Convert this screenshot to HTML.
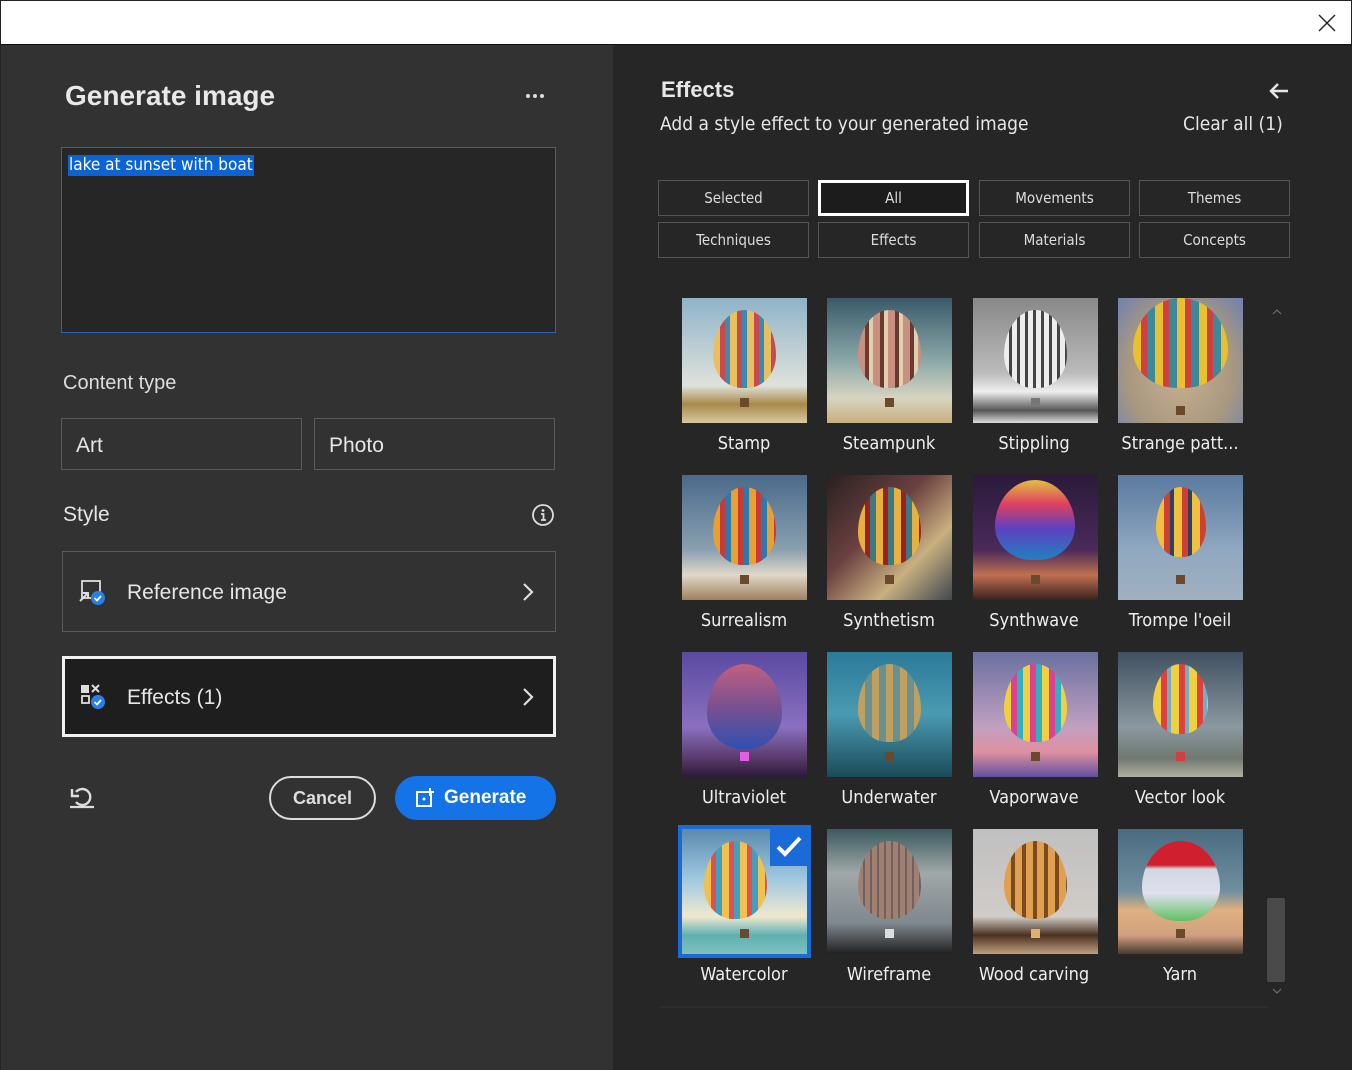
<!DOCTYPE html>
<html><head><meta charset="utf-8"><style>
*{box-sizing:border-box;margin:0;padding:0}
body{width:1352px;height:1070px;overflow:hidden;background:#262626;font-family:"Liberation Sans","DejaVu Sans",sans-serif;position:relative;color:#e6e6e6}
.top{position:absolute;left:0;top:0;width:1352px;height:45px;background:#fff;border:1px solid #222;border-bottom:1px solid #111}
.left{position:absolute;left:1px;top:45px;width:612px;height:1025px;background:#323232}
.abs{position:absolute}
.box{position:absolute;border:1px solid #5a5a5a}
.tab{position:absolute;width:151px;height:36px;border:1px solid #555;background:#262626;color:#ddd;font-size:15px;text-align:center;line-height:34px;font-family:"DejaVu Sans Condensed","DejaVu Sans",sans-serif}
.th{position:absolute;width:125px;height:125px;overflow:hidden}
.bl{position:absolute;left:31px;top:12px;width:63px;height:78px;border-radius:50% 50% 46% 46%/58% 58% 42% 42%}
.bk{position:absolute;left:58px;top:100px;width:9px;height:9px;background:#6a4a2a}
.lb{position:absolute;width:146px;text-align:center;font-size:18px;color:#eee;font-family:"DejaVu Sans Condensed","DejaVu Sans",sans-serif}
</style></head><body>
<div class="top"><svg class="abs" style="left:1317px;top:13px" width="18" height="18"><path d="M1 1L17 17M17 1L1 17" stroke="#222" stroke-width="1.4"/></svg></div>
<div class="left"></div>
<div class="abs" style="left:65px;top:80px;font-size:28px;font-weight:bold;color:#e8e8e8">Generate image</div>
<svg class="abs" style="left:525px;top:93px" width="22" height="6"><circle cx="3" cy="3" r="2" fill="#ddd"/><circle cx="10" cy="3" r="2" fill="#ddd"/><circle cx="17" cy="3" r="2" fill="#ddd"/></svg>
<div class="abs" style="left:61px;top:147px;width:495px;height:186px;background:#262626;border:1px solid #2d63b5"></div>
<div class="abs" style="left:68px;top:155px;height:21px;padding:0 1px;background:#0a64d6;color:#fff;font-size:17px;line-height:21px;font-family:'DejaVu Sans Condensed','DejaVu Sans',sans-serif">lake at sunset with boat</div>
<div class="abs" style="left:63px;top:372px;font-size:20px;color:#ddd">Content type</div>
<div class="box" style="left:61px;top:418px;width:241px;height:52px"></div>
<div class="abs" style="left:76px;top:434px;font-size:21px">Art</div>
<div class="box" style="left:314px;top:418px;width:241px;height:52px"></div>
<div class="abs" style="left:329px;top:434px;font-size:21px">Photo</div>
<div class="abs" style="left:63px;top:503px;font-size:21px">Style</div>
<svg class="abs" style="left:531px;top:503px" width="24" height="24"><circle cx="12" cy="12" r="10" stroke="#ddd" stroke-width="1.8" fill="none"/><circle cx="12" cy="7.5" r="1.4" fill="#ddd"/><path d="M10 11h2.5v6M10 17h5" stroke="#ddd" stroke-width="1.8" fill="none"/></svg>
<div class="box" style="left:62px;top:551px;width:494px;height:81px"></div>
<svg class="abs" style="left:78px;top:579px" width="30" height="28"><rect x="4" y="2" width="18" height="17" stroke="#ddd" stroke-width="1.8" fill="none"/><path d="M2 22l8-8M5 14h5v5" stroke="#ddd" stroke-width="2" fill="none"/><circle cx="20" cy="19" r="7" fill="#2a7ee8"/><path d="M16.5 19l2.5 2.5 4-4.5" stroke="#fff" stroke-width="1.8" fill="none"/></svg>
<div class="abs" style="left:127px;top:581px;font-size:21px">Reference image</div>
<svg class="abs" style="left:520px;top:581px" width="16" height="22"><path d="M4 3l8 8-8 8" stroke="#ddd" stroke-width="2.2" fill="none"/></svg>
<div class="abs" style="left:62px;top:656px;width:494px;height:81px;background:#1e1e1e;border:3px solid #f2f2f2"></div>
<svg class="abs" style="left:80px;top:684px" width="30" height="28"><rect x="1" y="1" width="8" height="8" fill="#ddd"/><path d="M12 1l7 7M19 1l-7 7" stroke="#ddd" stroke-width="2"/><rect x="2" y="12" width="7" height="7" stroke="#ddd" stroke-width="1.8" fill="none"/><circle cx="18" cy="18" r="7" fill="#2a7ee8"/><path d="M14.5 18l2.5 2.5 4-4.5" stroke="#fff" stroke-width="1.8" fill="none"/></svg>
<div class="abs" style="left:127px;top:686px;font-size:21px">Effects (1)</div>
<svg class="abs" style="left:520px;top:686px" width="16" height="22"><path d="M4 3l8 8-8 8" stroke="#ddd" stroke-width="2.2" fill="none"/></svg>
<svg class="abs" style="left:68px;top:784px" width="30" height="26"><path d="M8 8a8 8 0 1 1 0 10" stroke="#ddd" stroke-width="2.4" fill="none"/><path d="M4 5v7h7" stroke="#ddd" stroke-width="2.4" fill="none"/><path d="M2 23h24" stroke="#ddd" stroke-width="2.2"/></svg>
<div class="abs" style="left:269px;top:776px;width:107px;height:44px;border:2px solid #ddd;border-radius:22px;text-align:center;line-height:40px;font-size:18px;font-weight:bold;color:#ddd">Cancel</div>
<div class="abs" style="left:395px;top:776px;width:161px;height:44px;background:#1473e6;border-radius:22px"></div>
<svg class="abs" style="left:415px;top:787px" width="22" height="22"><rect x="2" y="5" width="14" height="14" stroke="#fff" stroke-width="2" fill="none"/><path d="M15 1v8M11 5h8" stroke="#fff" stroke-width="2"/><circle cx="9" cy="12" r="1.5" fill="#fff"/></svg>
<div class="abs" style="left:444px;top:787px;font-size:19px;font-weight:bold;color:#fff">Generate</div>

<div class="abs" style="left:661px;top:77px;font-size:22px;font-weight:bold;color:#e8e8e8">Effects</div>
<div class="abs" style="left:660px;top:113px;font-size:19px;color:#e6e6e6;font-family:'DejaVu Sans Condensed','DejaVu Sans',sans-serif">Add a style effect to your generated image</div>
<div class="abs" style="left:1183px;top:113px;font-size:19px;color:#e6e6e6;font-family:'DejaVu Sans Condensed','DejaVu Sans',sans-serif">Clear all (1)</div>
<svg class="abs" style="left:1268px;top:81px" width="22" height="20"><path d="M20 10H3M10 3L3 10l7 7" stroke="#e6e6e6" stroke-width="2.4" fill="none"/></svg>
<div class="tab" style="left:658px;top:180px">Selected</div>
<div class="tab" style="left:818px;top:180px;border:3px solid #fff;background:#1c1c1c;line-height:30px">All</div>
<div class="tab" style="left:979px;top:180px">Movements</div>
<div class="tab" style="left:1139px;top:180px">Themes</div>
<div class="tab" style="left:658px;top:222px">Techniques</div>
<div class="tab" style="left:818px;top:222px">Effects</div>
<div class="tab" style="left:979px;top:222px">Materials</div>
<div class="tab" style="left:1139px;top:222px">Concepts</div>

<!-- row 1 -->
<div class="th" style="left:682px;top:298px;background:linear-gradient(180deg,#8fb3c8,#dfe2dc 70%,#a88a4a 85%,#d8c8a0)"><div class="bl" style="background:repeating-linear-gradient(90deg,#e8c060 0 7px,#c84a4a 7px 12px,#3a8ab8 12px 17px)"></div><div class="bk"></div></div>
<div class="th" style="left:827px;top:298px;background:linear-gradient(180deg,#3a5a6a,#8aa8a8 50%,#d8d4c0 80%,#c8b080)"><div class="bl" style="background:repeating-linear-gradient(90deg,#c89080 0 7px,#6a3a30 7px 11px,#e0d0b0 11px 15px)"></div><div class="bk"></div></div>
<div class="th" style="left:973px;top:298px;background:linear-gradient(180deg,#888,#bbb 60%,#eee 75%,#555 90%,#ddd)"><div class="bl" style="background:repeating-linear-gradient(90deg,#eee 0 5px,#444 5px 8px)"></div><div class="bk" style="background:#777"></div></div>
<div class="th" style="left:1118px;top:298px;background:radial-gradient(ellipse at 50% 60%,#c8b090,#a89880 60%,#7080b0)"><div class="bl" style="left:15px;top:0;width:95px;height:90px;background:repeating-linear-gradient(90deg,#e8c030 0 8px,#d04040 8px 14px,#3a8a9a 14px 22px)"></div><div class="bk" style="top:108px"></div></div>
<div class="lb" style="left:671px;top:433px">Stamp</div>
<div class="lb" style="left:816px;top:433px">Steampunk</div>
<div class="lb" style="left:961px;top:433px">Stippling</div>
<div class="lb" style="left:1107px;top:433px">Strange patt...</div>
<!-- row 2 -->
<div class="th" style="left:682px;top:475px;background:linear-gradient(180deg,#4a6a8a,#8aa0b0 60%,#e0d8c8 80%,#a08060)"><div class="bl" style="background:repeating-linear-gradient(90deg,#e8a030 0 7px,#c83a3a 7px 12px,#2a7ab0 12px 18px)"></div><div class="bk"></div></div>
<div class="th" style="left:827px;top:475px;background:linear-gradient(135deg,#2a2020,#6a4040 40%,#c8b080 70%,#404850)"><div class="bl" style="background:repeating-linear-gradient(90deg,#e8b040 0 7px,#a02020 7px 12px,#3a7a80 12px 18px)"></div><div class="bk"></div></div>
<div class="th" style="left:973px;top:475px;background:linear-gradient(180deg,#2a1a3a,#4a2a5a 60%,#c07050 80%,#3a2020)"><div class="bl" style="left:22px;top:5px;width:80px;height:80px;background:linear-gradient(180deg,#e0c040,#e04060 30%,#6040c0 60%,#2080c0)"></div><div class="bk"></div></div>
<div class="th" style="left:1118px;top:475px;background:linear-gradient(180deg,#5a7aa0,#90a8c0 60%,#a0b0c0)"><div class="bl" style="left:38px;width:50px;height:70px;background:repeating-linear-gradient(90deg,#f0c040 0 8px,#d04030 8px 14px,#304060 14px 18px)"></div><div class="bk"></div></div>
<div class="lb" style="left:671px;top:610px">Surrealism</div>
<div class="lb" style="left:816px;top:610px">Synthetism</div>
<div class="lb" style="left:961px;top:610px">Synthwave</div>
<div class="lb" style="left:1107px;top:610px">Trompe l'oeil</div>
<!-- row 3 -->
<div class="th" style="left:682px;top:652px;background:linear-gradient(180deg,#5a4aa0,#8a70c0 60%,#5a3a6a 85%,#2a1a3a)"><div class="bl" style="left:25px;width:75px;height:85px;background:linear-gradient(180deg,#c06080,#7a5090 50%,#3050b0)"></div><div class="bk" style="background:#e060e0"></div></div>
<div class="th" style="left:827px;top:652px;background:linear-gradient(180deg,#2a7a9a,#4a9ab0 50%,#1a4a5a)"><div class="bl" style="background:repeating-linear-gradient(90deg,#c0a060 0 7px,#6a9090 7px 14px)"></div><div class="bk"></div></div>
<div class="th" style="left:973px;top:652px;background:linear-gradient(180deg,#6a70a0,#c0a0c0 60%,#e090a0 80%,#6050a0)"><div class="bl" style="background:repeating-linear-gradient(90deg,#f0d040 0 7px,#e04090 7px 13px,#30b0c0 13px 19px)"></div><div class="bk"></div></div>
<div class="th" style="left:1118px;top:652px;background:linear-gradient(180deg,#405060,#8a98a0 60%,#707870 85%,#b0b0a0)"><div class="bl" style="left:35px;width:55px;height:70px;background:repeating-linear-gradient(90deg,#f0d040 0 8px,#e04040 8px 14px,#70b0c0 14px 18px)"></div><div class="bk" style="background:#d04040"></div></div>
<div class="lb" style="left:671px;top:787px">Ultraviolet</div>
<div class="lb" style="left:816px;top:787px">Underwater</div>
<div class="lb" style="left:961px;top:787px">Vaporwave</div>
<div class="lb" style="left:1107px;top:787px">Vector look</div>
<!-- row 4 -->
<div class="abs" style="left:678px;top:825px;width:133px;height:133px;background:#1a6ad8"></div>
<div class="th" style="left:682px;top:829px;background:linear-gradient(180deg,#5a8ab0,#a0c8e0 40%,#f0e8d0 70%,#60b0b0 85%,#80c0c0)"><div class="bl" style="left:22px;background:repeating-linear-gradient(90deg,#f0c050 0 7px,#e05050 7px 12px,#40a0c0 12px 18px)"></div><div class="bk"></div></div>
<div class="abs" style="left:770px;top:829px;width:37px;height:37px;background:#1a6ad8"></div>
<svg class="abs" style="left:775px;top:834px" width="28" height="26"><path d="M3 13l7 7L25 4" stroke="#fff" stroke-width="4" fill="none"/></svg>
<div class="th" style="left:827px;top:829px;background:linear-gradient(180deg,#3a5a60,#a0a8a8 35%,#808890 75%,#202020)"><div class="bl" style="background:repeating-linear-gradient(90deg,#a08070 0 5px,#706060 5px 7px)"></div><div class="bk" style="background:#ddd"></div></div>
<div class="th" style="left:973px;top:829px;background:linear-gradient(180deg,#c0c0c0,#d0ccc8 70%,#4a3020 85%,#c0a080)"><div class="bl" style="background:repeating-linear-gradient(90deg,#e0a050 0 7px,#7a4a20 7px 11px)"></div><div class="bk" style="background:#e0b070"></div></div>
<div class="th" style="left:1118px;top:829px;background:linear-gradient(180deg,#4a6a80,#7090a0 50%,#e0b080 65%,#d0a080 85%,#4a3a30)"><div class="bl" style="left:24px;width:78px;height:80px;background:linear-gradient(180deg,#d02030 30%,#d0d8e0 35%,#e0e0f0 65%,#60c060)"></div><div class="bk"></div></div>
<div class="lb" style="left:671px;top:964px">Watercolor</div>
<div class="lb" style="left:816px;top:964px">Wireframe</div>
<div class="lb" style="left:961px;top:964px">Wood carving</div>
<div class="lb" style="left:1107px;top:964px">Yarn</div>

<svg class="abs" style="left:1272px;top:309px" width="10" height="6"><path d="M1 5l4-4 4 4" stroke="#777" fill="none"/></svg>
<div class="abs" style="left:1267px;top:898px;width:18px;height:84px;background:#4a4a4a;border-radius:2px"></div>
<svg class="abs" style="left:1272px;top:988px" width="10" height="6"><path d="M1 1l4 4 4-4" stroke="#777" fill="none"/></svg>
<div class="abs" style="left:660px;top:1006px;width:608px;height:2px;background:#2e2e2e"></div>
</body></html>
